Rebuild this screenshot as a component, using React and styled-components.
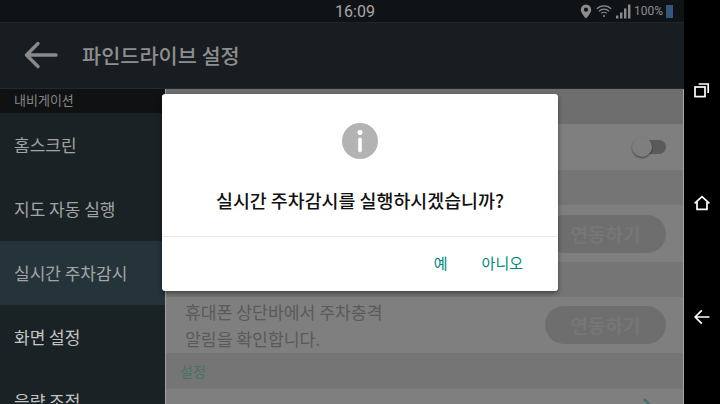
import React from 'react';
import styled, { createGlobalStyle } from 'styled-components';

const NAV_ITEMS = [
  { label: '홈스크린', dim: true },
  { label: '지도 자동 실행', dim: true },
  { label: '실시간 주차감시', dim: true, active: true },
  { label: '화면 설정' },
  { label: '음량 조정' }
];

function App() {
  return (
    <>
      <GlobalStyle />
      <Screen>
        <Main>
          <StatusBar>
            <Time>16:09</Time>
            <StatusIcons>
              <svg width="12" height="15" viewBox="0 0 12 15">
                <path fill="#8c8c8c" fillRule="evenodd" d="M6 .6a5.2 5.2 0 0 0-5.2 5.2c0 3.6 5.2 8.8 5.2 8.8s5.2-5.2 5.2-8.8A5.2 5.2 0 0 0 6 .6zm0 7.2a2.1 2.1 0 1 1 0-4.2 2.1 2.1 0 0 1 0 4.2z" />
              </svg>
              <svg width="16" height="13" viewBox="0 0 16 13" fill="none" stroke="#8c8c8c" strokeWidth="1.2">
                <path d="M.8 3.8a10.2 10.2 0 0 1 14.4 0M3 6.2a7.1 7.1 0 0 1 10 0M5.2 8.4a4 4 0 0 1 5.6 0" />
                <circle cx="8" cy="11" r="1" fill="#8c8c8c" stroke="none" />
              </svg>
              <svg width="15" height="15" viewBox="0 0 15 15" fill="#8c8c8c">
                <rect x="0" y="11.5" width="2.4" height="3" />
                <rect x="4" y="8.5" width="2.4" height="6" />
                <rect x="8" y="4.5" width="2.4" height="10" />
                <rect x="12" y="0.5" width="2.4" height="14" />
              </svg>
              <Percent>100%</Percent>
              <Battery />
            </StatusIcons>
          </StatusBar>
          <AppBar>
            <svg width="34" height="28" viewBox="0 0 34 28" fill="none" stroke="#8a8a8a" strokeWidth="3.4" strokeLinecap="round" strokeLinejoin="round">
              <path d="M32 14H3M14 2.5 2.5 14 14 25.5" />
            </svg>
            <Title>파인드라이브 설정</Title>
          </AppBar>
          <Body>
            <Sidebar>
              <SideHeader>내비게이션</SideHeader>
              { NAV_ITEMS.map(({ label, dim, active }) => (
                <NavItem key={ label } $dim={ dim } $active={ active }>{ label }</NavItem>
              )) }
            </Sidebar>
            <Content>
              <SectionHeader $height={ 35 } $shade="#dcdcdc" />
              <Row $height={ 46 }>
                <Toggle />
              </Row>
              <SectionHeader $height={ 35 } />
              <Row $height={ 57 }>
                <LinkButton>연동하기</LinkButton>
              </Row>
              <SectionHeader $height={ 35 } />
              <Row $height={ 56 }>
                <RowText>휴대폰 상단바에서 주차충격<br />알림을 확인합니다.</RowText>
                <LinkButton>연동하기</LinkButton>
              </Row>
              <SectionHeader $height={ 36 }>설정</SectionHeader>
              <Row $height={ 46 } $top>
                <LastRowText>민감도 설정</LastRowText>
                <Chevron width="16" height="28" viewBox="0 0 16 28" fill="none" stroke="#8fe0d2" strokeWidth="2.6">
                  <path d="M2 2l12 12L2 26" />
                </Chevron>
              </Row>
              <Scrim />
            </Content>
          </Body>
        </Main>
        <NavBar>
          <svg width="18" height="18" viewBox="0 0 18 18" fill="none" stroke="#fff" strokeWidth="1.7">
            <rect x="2" y="6" width="10" height="9.6" />
            <path d="M5.6 3h9.6v9" />
          </svg>
          <svg width="18" height="18" viewBox="0 0 18 18" fill="none" stroke="#fff" strokeWidth="1.7">
            <path d="M1.6 9.4 9 2.6l7.4 6.8M4 8v7.4h10V8" />
          </svg>
          <svg width="18" height="18" viewBox="0 0 18 18" fill="none" stroke="#fff" strokeWidth="1.7">
            <path d="M16.4 9H2.4M8.8 2.4 2.2 9l6.6 6.6" />
          </svg>
        </NavBar>
        <Dialog>
          <InfoIcon width="36" height="36" viewBox="0 0 36 36">
            <circle cx="18" cy="18" r="18" fill="#b3b3b3" />
            <circle cx="18" cy="9.4" r="2.5" fill="#fff" />
            <rect x="16.2" y="14.4" width="3.6" height="15" rx="1.8" fill="#fff" />
          </InfoIcon>
          <Message>실시간 주차감시를 실행하시겠습니까?</Message>
          <Actions>
            <ActionButton type="button">예</ActionButton>
            <ActionButton type="button">아니오</ActionButton>
          </Actions>
        </Dialog>
      </Screen>
    </>
  );
}

const GlobalStyle = createGlobalStyle`
  html, body {
    margin: 0;
    padding: 0;
    background: #000;
  }
  body {
    font-family: "Noto Sans CJK KR", "Noto Sans", sans-serif;
  }
`;

const Screen = styled.div`
  position: relative;
  display: flex;
  width: 720px;
  height: 404px;
  overflow: hidden;
`;

const Main = styled.div`
  display: flex;
  flex-direction: column;
  width: 684px;
  height: 100%;
`;

const StatusBar = styled.div`
  position: relative;
  flex: none;
  display: flex;
  align-items: center;
  justify-content: center;
  box-sizing: border-box;
  height: 23px;
  background: #101316;
  border-bottom: 1px solid #20252a;
`;

const Time = styled.span`
  font-family: Roboto, sans-serif;
  font-size: 16px;
  color: #a6a6a6;
  margin-left: 26px;
`;

const StatusIcons = styled.div`
  position: absolute;
  right: 11px;
  top: 4px;
  display: flex;
  align-items: center;
  gap: 4px;
`;

const Percent = styled.span`
  font-family: Roboto, sans-serif;
  font-size: 12px;
  line-height: 15px;
  color: #8c8c8c;
  margin: 0 -1px;
`;

const Battery = styled.div`
  width: 7px;
  height: 13px;
  background: #35567f;
`;

const AppBar = styled.div`
  flex: none;
  display: flex;
  align-items: center;
  gap: 24px;
  box-sizing: border-box;
  height: 66px;
  padding: 0 0 2px 24px;
  background: #181d21;
  border-bottom: 1px solid #23292d;
`;

const Title = styled.h1`
  margin: 0;
  font-size: 20.8px;
  font-weight: 500;
  color: #8e8e8e;
`;

const Body = styled.div`
  flex: 1;
  display: flex;
  min-height: 0;
`;

const Sidebar = styled.nav`
  flex: none;
  width: 165px;
  background: #1b2225;
  overflow: hidden;
`;

const SideHeader = styled.div`
  height: 24px;
  padding-left: 14px;
  background: #0f1113;
  font-size: 13px;
  line-height: 21px;
  color: #868686;
`;

const NavItem = styled.div`
  height: 64px;
  padding-left: 14px;
  background: ${ ({ $active }) => ($active ? '#25343a' : 'transparent') };
  font-size: 17px;
  line-height: 64px;
  color: ${ ({ $dim }) => ($dim ? '#a4a4a4' : '#c4c4c4') };
`;

const Content = styled.section`
  position: relative;
  flex: 1;
  overflow: hidden;
  background: #fff;
  border-left: 1px solid #a0a0a0;
  border-right: 1px solid #a8a8a8;
`;

const SectionHeader = styled.div`
  height: ${ ({ $height }) => $height }px;
  padding-left: 14px;
  background: ${ ({ $shade }) => $shade || '#ebebeb' };
  font-size: 14px;
  line-height: 36px;
  color: #8fe0d2;
`;

const Row = styled.div`
  display: flex;
  align-items: ${ ({ $top }) => ($top ? 'flex-start' : 'center') };
  justify-content: space-between;
  box-sizing: border-box;
  height: ${ ({ $height }) => $height }px;
  padding: 0 17px 0 19px;
  background: #fff;
`;

const RowText = styled.p`
  margin: 0;
  font-size: 17.2px;
  line-height: 27px;
  color: #b4b4b4;
`;

const LastRowText = styled(RowText)`
  margin-top: 12px;
`;

const LinkButton = styled.div`
  margin-left: auto;
  width: 121px;
  height: 38px;
  border-radius: 19px;
  background: #dddddd;
  font-size: 19px;
  font-weight: 500;
  line-height: 38px;
  text-align: center;
  color: #efefef;
`;

const Toggle = styled.div`
  position: relative;
  margin-left: auto;
  width: 25px;
  height: 14px;
  border-radius: 7px;
  background: #b4b4b4;
  &::before {
    content: '';
    position: absolute;
    left: -9px;
    top: -3px;
    width: 20px;
    height: 20px;
    border-radius: 50%;
    background: #fdfdfd;
    box-shadow: 0 1px 2px rgba(0, 0, 0, 0.5);
  }
`;

const Chevron = styled.svg`
  margin: 8px 8px 0 auto;
`;

const Scrim = styled.div`
  position: absolute;
  inset: 0;
  background: rgba(0, 0, 0, 0.5);
`;

const NavBar = styled.div`
  flex: 1;
  display: flex;
  flex-direction: column;
  align-items: center;
  justify-content: center;
  gap: 95.5px;
  padding-top: 2px;
  background: #000;
`;

const Dialog = styled.div`
  position: absolute;
  left: 162px;
  top: 94px;
  display: flex;
  flex-direction: column;
  align-items: center;
  box-sizing: border-box;
  width: 396px;
  height: 197px;
  padding-top: 29px;
  border-radius: 3px;
  background: #fff;
  box-shadow: 0 2px 5px rgba(0, 0, 0, 0.45);
`;

const InfoIcon = styled.svg`
  flex: none;
`;

const Message = styled.p`
  margin: 26px 0 0;
  font-size: 18.4px;
  font-weight: 500;
  line-height: 30px;
  color: #111;
`;

const Actions = styled.div`
  align-self: stretch;
  display: flex;
  justify-content: flex-end;
  align-items: center;
  gap: 34px;
  box-sizing: border-box;
  margin-top: 21px;
  padding: 0 35px 2px 0;
  height: 55px;
  border-top: 1px solid #e6e6e6;
`;

const ActionButton = styled.button`
  padding: 0;
  border: 0;
  background: none;
  font-family: inherit;
  font-size: 15px;
  font-weight: 400;
  line-height: 22px;
  color: #00897b;
`;

export default App;
